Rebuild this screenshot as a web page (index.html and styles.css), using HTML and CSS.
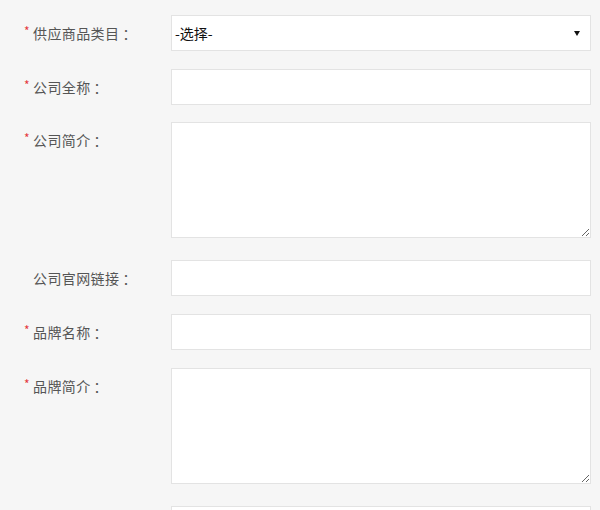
FILE: index.html
```html
<!DOCTYPE html>
<html lang="zh-CN">
<head>
<meta charset="utf-8">
<title>供应商信息</title>
<link rel="stylesheet" href="styles.css">
</head>
<body>
<form class="form">
  <div class="row">
    <label class="label"><span class="req">*</span>供应商品类目<span class="colon">：</span></label>
    <div class="select-wrap">
      <select class="field select">
        <option>-选择-</option>
      </select>
    </div>
  </div>
  <div class="row row-tight">
    <label class="label"><span class="req">*</span>公司全称<span class="colon">：</span></label>
    <input class="field" type="text">
  </div>
  <div class="row row-area">
    <label class="label"><span class="req">*</span>公司简介<span class="colon">：</span></label>
    <textarea class="field area"></textarea>
  </div>
  <div class="row">
    <label class="label"><span class="req none"></span>公司官网链接<span class="colon">：</span></label>
    <input class="field" type="text">
  </div>
  <div class="row">
    <label class="label"><span class="req">*</span>品牌名称<span class="colon">：</span></label>
    <input class="field" type="text">
  </div>
  <div class="row row-area">
    <label class="label"><span class="req">*</span>品牌简介<span class="colon">：</span></label>
    <textarea class="field area"></textarea>
  </div>
  <div class="row">
    <label class="label"></label>
    <input class="field" type="text">
  </div>
</form>
</body>
</html>
```
FILE: styles.css
```css
html, body {
  margin: 0;
  padding: 0;
  background: #f6f6f6;
}
body {
  font-family: "Microsoft YaHei", "Noto Sans CJK SC", "Noto Sans", sans-serif;
  font-size: 14px;
  color: #555;
  overflow: hidden;
}
.form {
  padding-top: 15px;
}
.row {
  display: flex;
  align-items: flex-start;
  margin-bottom: 18px;
}
.row-tight {
  margin-bottom: 17px;
}
.row-area {
  margin-bottom: 22px;
}
.label {
  box-sizing: border-box;
  width: 171px;
  padding-left: 24px;
  line-height: 35px;
  height: 36px;
  display: flex;
  align-items: center;
  white-space: nowrap;
  letter-spacing: 0.4px;
}
.colon {
  margin-left: 3px;
}
.req {
  display: inline-block;
  width: 9px;
  color: #e4393c;
  font-size: 12px;
  line-height: 12px;
  position: relative;
  top: -2px;
}
.field {
  box-sizing: border-box;
  display: block;
  width: 420px;
  height: 36px;
  margin: 0;
  padding: 0 4px;
  border: 1px solid #e3e3e3;
  border-radius: 0;
  background: #fff;
  font-family: "Microsoft YaHei", "Noto Sans CJK SC", "Noto Sans", sans-serif;
  font-size: 14px;
  color: #111;
  outline: none;
}
.select-wrap {
  position: relative;
  width: 420px;
}
.select {
  -webkit-appearance: none;
  appearance: none;
  padding-left: 3px;
}
.select-wrap::after {
  content: "";
  position: absolute;
  right: 11px;
  top: 16px;
  width: 0;
  height: 0;
  border-left: 3px solid transparent;
  border-right: 3px solid transparent;
  border-top: 5px solid #111;
  pointer-events: none;
}
.area {
  height: 116px;
  padding: 4px;
  resize: both;
}
```
